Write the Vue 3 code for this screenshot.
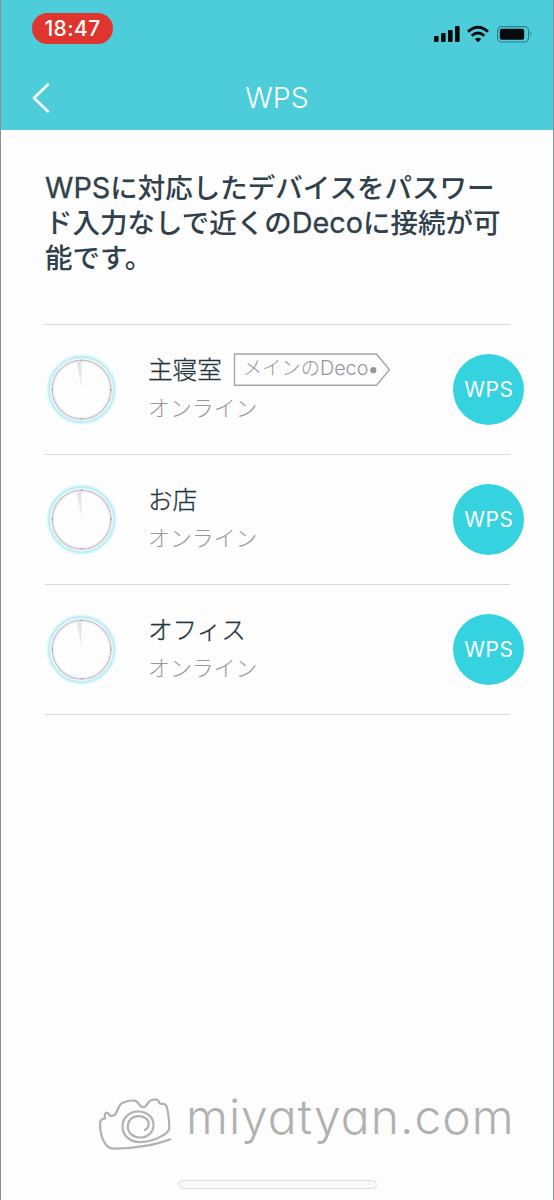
<script setup>
const devices = [
  { name: '主寝室', main: true },
  { name: 'お店', main: false },
  { name: 'オフィス', main: false },
]
</script>

<template>
  <div class="screen">
    <header class="top">
      <div class="status">
        <span class="time">18:47</span>
        <svg class="signals" width="100" height="20" viewBox="0 0 100 20">
          <g fill="#050b0c">
            <rect x="1" y="12" width="4.6" height="6" rx="1" />
            <rect x="8" y="9" width="4.6" height="9" rx="1" />
            <rect x="15" y="6" width="4.6" height="12" rx="1" />
            <rect x="22" y="2" width="4.6" height="16" rx="1" />
            <path d="M45 18.2 L41.8 15 Q45 12.6 48.2 15 Z" />
          </g>
          <g fill="none" stroke="#050b0c" stroke-width="2.8">
            <path d="M35 7.6 Q45 -1 55 7.6" />
            <path d="M38.7 11.7 Q45 6.2 51.3 11.7" />
          </g>
          <rect x="64.6" y="2.6" width="31" height="15.4" rx="4.2" fill="none" stroke="#2f7f88" stroke-width="1.2" />
          <rect x="66.8" y="4.7" width="24.4" height="11" rx="2" fill="#050b0c" />
          <path d="M97.3 7.8 Q99.6 10.2 97.3 12.6 Z" fill="#2f7f88" />
        </svg>
      </div>
      <div class="nav">
        <svg class="back" width="20" height="32" viewBox="0 0 20 32">
          <path d="M17 2.5 L3 16 L17 29.5" fill="none" stroke="#fff" stroke-width="2.5" stroke-linecap="round" stroke-linejoin="round" />
        </svg>
        <h1>WPS</h1>
      </div>
    </header>

    <main>
      <h2><span class="latin">WPS</span>に対応したデバイスをパスワー<br />ド入力なしで近くの<span class="latin">Deco</span>に接続が可<br />能です。</h2>
      <ul>
        <li v-for="d in devices" :key="d.name">
          <svg class="dial" width="74" height="74" viewBox="0 0 74 74">
            <defs>
              <filter id="glow" x="-10%" y="-10%" width="120%" height="120%"><feGaussianBlur stdDeviation="0.9" /></filter>
              <filter id="soft"><feGaussianBlur stdDeviation="0.4" /></filter>
              <linearGradient id="beam" x1="0" y1="0" x2="0" y2="1">
                <stop offset="0" stop-color="#e3e1e4" />
                <stop offset="1" stop-color="#f1eff2" />
              </linearGradient>
            </defs>
            <circle cx="36.6" cy="36.6" r="32.5" fill="none" stroke="#a5e9f4" stroke-width="2.6" filter="url(#glow)" />
            <circle cx="36.6" cy="36.6" r="31.1" fill="#fff" />
            <circle cx="36.6" cy="36.6" r="29.3" fill="#fefdfe" stroke="#c9c4c9" stroke-width="1.7" filter="url(#soft)" />
            <circle cx="36.6" cy="36.6" r="28" fill="none" stroke="#f3f0f3" stroke-width="1.4" />
            <path d="M31.9 10.1 Q34.1 8.2 36.6 8.6 L36.4 35.6 Z" fill="url(#beam)" />
            <path d="M36.6 6.6v1.4M36.6 65.2v1.4M6.6 36.6h1.4M65.2 36.6h1.4" stroke="#98949a" stroke-width="1.2" />
          </svg>
          <div class="info">
            <div class="row">
              <span class="name">{{ d.name }}</span>
              <span v-if="d.main" class="tag">
                <svg width="158" height="34" viewBox="0 0 158 34">
                  <path d="M1.5 1 H143.5 L156.5 16.7 L143.5 32.2 H1.5 Z" fill="none" stroke="#a5a5a9" stroke-width="1.4" />
                  <circle cx="140.3" cy="17.2" r="3.1" fill="#98989c" />
                </svg>
                <span class="tagtext">メインの<span class="deco">Deco</span></span>
              </span>
            </div>
            <div class="state">オンライン</div>
          </div>
          <button class="wps">WPS</button>
        </li>
      </ul>
    </main>

    <footer>
      <div class="mark">
        <svg width="76" height="56" viewBox="0 0 76 56">
          <path fill="none" stroke="#b1b1b1" stroke-width="2.2" stroke-linecap="round" stroke-linejoin="round" d="M74.3 44.3 C66 47.5 59 49.5 50.7 50.7 C40 52.6 29 53.5 19 53.7 C14 53.8 11 51.5 9 48.3 C5.3 43 4 36 4 28.3 C4 25.3 5.5 23.8 9 23.3 C8.5 21 8.7 17.7 10.7 17.7 C13 17.7 12.8 21.2 15.7 21 C17.6 21 19 20.3 20 18.3 C22 14 22.3 10.5 25.7 8.3 C29.5 6.2 35 5.2 39 5.7 C42.7 6.5 43 11 45.7 11.7 C47.5 12.4 49 12 50 11 C52 8.2 52.4 5.7 55.7 5 C58.5 4.2 61.2 4.2 62.3 5.7 C63.2 7.2 63 8.5 64.7 8.6 C67.5 8.7 69.5 8.8 70.4 11 C72.2 16 73 25 73.3 31.7 C73.5 35 72.2 37 69 39.2 C62.5 43.5 52.5 47 44 47.1 C34 47 26.5 40.5 26.5 31.5 C26.5 22.5 33.5 16.5 42.3 16.5 C51 16.5 57.5 22.2 57.5 30 C57.5 37.5 51.5 42.7 44 42.5 C37 42.3 31.8 38 31.8 31.7 C31.8 25.4 36.3 21.2 42.3 21.2 C48.5 21.2 52.7 24.5 52.7 28.5 C52.7 31.3 51.3 33.5 49 35" />
        </svg>
        <span class="site">miyatyan.com</span>
      </div>
      <div class="home"></div>
    </footer>
  </div>
</template>

<style>
body { margin: 0; }
</style>

<style scoped>
.screen {
  box-sizing: border-box;
  width: 554px;
  height: 1200px;
  display: flex;
  flex-direction: column;
  background: #fdfdfd;
  border-left: 1px solid #8e9090;
  border-right: 1px solid #8e9090;
  font-family: Inter, "Noto Sans CJK JP", sans-serif;
  overflow: hidden;
}
.top {
  box-sizing: border-box;
  height: 130px;
  margin: 0 -1px;
  background: #4dcdda;
  border-left: 1px solid #3b818a;
  border-right: 1px solid #3b818a;
  color: #fff;
}
.status {
  display: flex;
  justify-content: space-between;
  height: 65px;
  padding: 13px 20px 0 31px;
  box-sizing: border-box;
}
.time {
  width: 81px;
  height: 31px;
  border-radius: 16px;
  background: #df352e;
  font-size: 21px;
  font-weight: 500;
  line-height: 32px;
  text-align: center;
  letter-spacing: 0.4px;
}
.signals { margin-top: 11px; }
.nav {
  display: grid;
  grid-template-columns: 60px 1fr 60px;
  align-items: center;
  height: 65px;
}
.back { margin-left: 30px; }
h1 {
  margin: -1px 0 0;
  text-align: center;
  font-size: 28.5px;
  font-weight: 300;
}
main { padding: 41px 43px 0 44px; height: 900px; box-sizing: border-box; }
h2 {
  margin: 0 -10px 0 0;
  height: 153px;
  font-size: 27.5px;
  font-weight: 500;
  line-height: 35px;
  color: #30414b;
  white-space: nowrap;
}
.latin { font-size: 28.8px; font-weight: 400; line-height: 1; -webkit-text-stroke: 0.3px #30414b; }
ul {
  margin: 0;
  padding: 0;
  list-style: none;
  border-top: 1px solid #d9d9da;
}
li {
  box-sizing: border-box;
  height: 130px;
  border-bottom: 1px solid #d9d9da;
  display: flex;
  align-items: center;
}
.info { margin-left: 29px; flex: 1; height: 78px; }
.row { display: flex; height: 38px; align-items: center; }
.name { font-size: 24.6px; font-weight: 300; color: #26353e; -webkit-text-stroke: 0.3px #26353e; line-height: 36px; white-space: nowrap; }
.tag { display: grid; margin-left: 11px; }
.tag > * { grid-area: 1 / 1; }
.tagtext { font-size: 19.3px; font-weight: 300; line-height: 30px; color: #98989c; padding-left: 10px; white-space: nowrap; }
.deco { font-size: 19.8px; }
.state { font-size: 21.9px; font-weight: 300; line-height: 38px; color: #98989c; }
.wps {
  width: 71px;
  height: 71px;
  margin: 0 -14px 0 0;
  padding: 0 0 0 1px;
  border: 0;
  border-radius: 50%;
  background: #35d3df;
  color: #fff;
  font: 400 21px/71px Inter, sans-serif;
  letter-spacing: 0.6px;
}
footer {
  display: flex;
  flex-direction: column;
  height: 170px;
  padding: 65px 0 0 95px;
  box-sizing: border-box;
}
.mark { display: flex; height: 64px; }
.site {
  margin-left: 14px;
  font-size: 48px;
  font-weight: 300;
  line-height: 44px;
  letter-spacing: 1px;
  font-feature-settings: "cv11";
  color: #b1b1b1;
  white-space: nowrap;
}
.home {
  box-sizing: border-box;
  width: 199px;
  height: 9px;
  margin: 21px 0 0 82px;
  border: 1px solid #dedede;
  border-radius: 5px;
  background: #f8f8f8;
}
</style>
